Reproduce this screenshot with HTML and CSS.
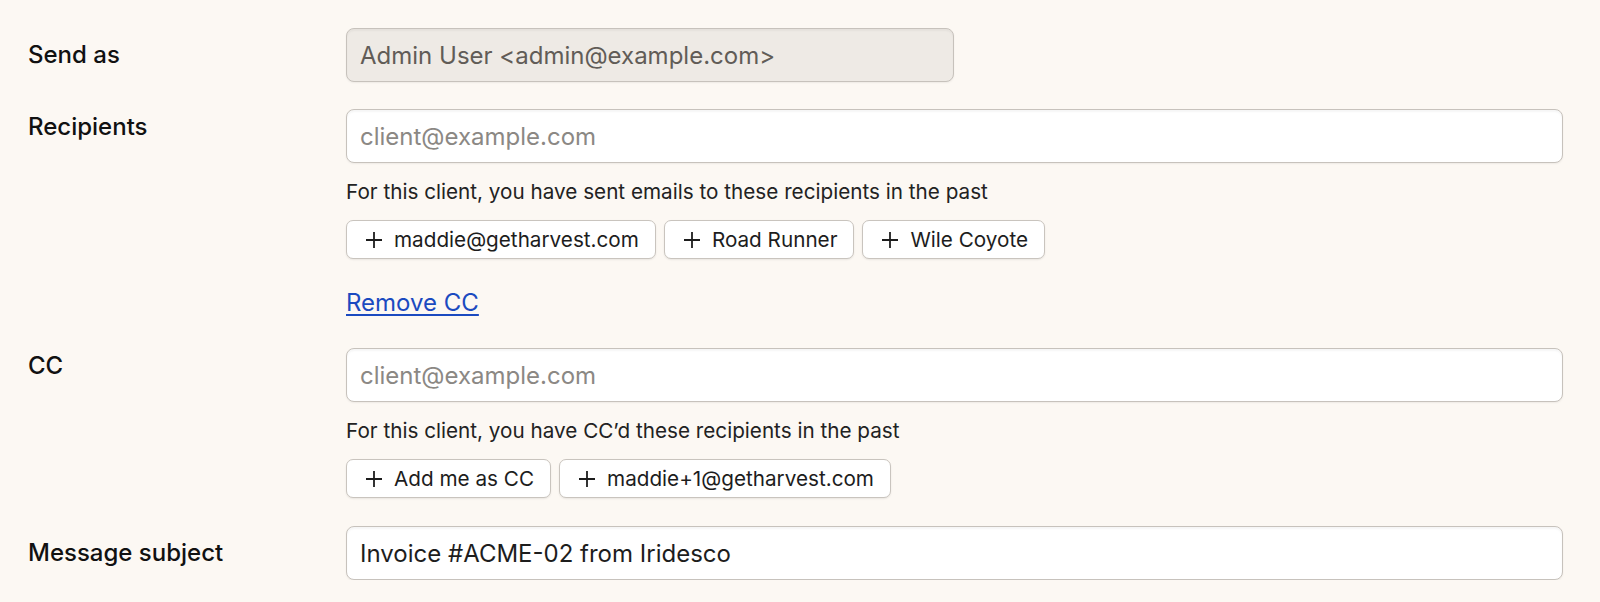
FILE: index.html
```html
<!DOCTYPE html>
<html lang="en">
<head>
    <meta charset="UTF-8">
    <meta name="viewport" content="width=device-width, initial-scale=1.0">
    <title>Send invoice</title>
    <link rel="stylesheet" href="styles.css">
</head>
<body>

    <form class="send-form" onsubmit="return false;">

        <div class="field field-center">
            <label class="field-label" for="sendAs">Send as</label>
            <div class="field-body">
                <input class="text-input text-input-disabled" id="sendAs" type="text" value="Admin User <admin@example.com>" disabled>
            </div>
        </div>

        <div class="field">
            <label class="field-label" for="recipients">Recipients</label>
            <div class="field-body">
                <input class="text-input" id="recipients" type="text" placeholder="client@example.com">
                <p class="hint">For this client, you have sent emails to these recipients in the past</p>
                <div class="chips">
                    <button class="chip" type="button">
                        <svg class="chip-icon" viewBox="0 0 18 18"><path d="M9 1v16M1 9h16"/></svg>
                        maddie@getharvest.com
                    </button>
                    <button class="chip" type="button">
                        <svg class="chip-icon" viewBox="0 0 18 18"><path d="M9 1v16M1 9h16"/></svg>
                        Road Runner
                    </button>
                    <button class="chip" type="button">
                        <svg class="chip-icon" viewBox="0 0 18 18"><path d="M9 1v16M1 9h16"/></svg>
                        Wile Coyote
                    </button>
                </div>
                <a class="link" href="#">Remove CC</a>
            </div>
        </div>

        <div class="field">
            <label class="field-label" for="cc">CC</label>
            <div class="field-body">
                <input class="text-input" id="cc" type="text" placeholder="client@example.com">
                <p class="hint">For this client, you have CC’d these recipients in the past</p>
                <div class="chips">
                    <button class="chip" type="button">
                        <svg class="chip-icon" viewBox="0 0 18 18"><path d="M9 1v16M1 9h16"/></svg>
                        Add me as CC
                    </button>
                    <button class="chip" type="button">
                        <svg class="chip-icon" viewBox="0 0 18 18"><path d="M9 1v16M1 9h16"/></svg>
                        maddie+1@getharvest.com
                    </button>
                </div>
            </div>
        </div>

        <div class="field field-center field-last">
            <label class="field-label" for="subject">Message subject</label>
            <div class="field-body">
                <input class="text-input" id="subject" type="text" value="Invoice #ACME-02 from Iridesco">
            </div>
        </div>

    </form>

</body>
</html>
```

FILE: styles.css
```css
body {
    margin: 0;
    background-color: #fcf8f3;
    color: #1d1d1d;
    font-family: Inter, "Liberation Sans", sans-serif;
}
.send-form {
    display: flex;
    flex-direction: column;
    gap: 27px;
    padding: 28px 37px 0 28px;
}
.field {
    display: grid;
    grid-template-columns: 318px 1fr;
    align-items: start;
}
.field-center {
    align-items: center;
}
.field-last {
    margin-top: 1px;
}
.field-label {
    font-size: 24px;
    font-weight: 500;
    line-height: 36px;
    color: #111;
}
.field-body {
    display: flex;
    flex-direction: column;
    align-items: flex-start;
}
.text-input {
    box-sizing: border-box;
    width: 100%;
    height: 54px;
    padding: 0 13px;
    border: 1px solid #c7c2bc;
    border-radius: 8px;
    background-color: #fff;
    box-shadow: inset 0 2px 2px rgba(0,0,0,0.04), 0 1px 2px rgba(0,0,0,0.06);
    font-family: inherit;
    font-size: 24px;
    color: #1d1d1d;
    outline: none;
}
.text-input::placeholder {
    color: #8b8884;
}
.text-input-disabled {
    width: 608px;
    background-color: #eeeae5;
    color: #615c57;
}
.hint {
    margin: 14px 0 0;
    font-size: 20.7px;
    line-height: 29px;
    color: #222;
}
.chips {
    display: flex;
    gap: 8px;
    margin-top: 14px;
}
.chip {
    display: flex;
    align-items: center;
    gap: 11px;
    height: 39px;
    padding: 0 16px 0 18px;
    border: 1px solid #c9c4be;
    border-radius: 7px;
    background-color: #fff;
    box-shadow: 0 1px 2px rgba(0,0,0,0.08);
    font-family: inherit;
    font-size: 20.7px;
    color: #1d1d1d;
    cursor: pointer;
}
.chip-icon {
    width: 18px;
    height: 18px;
    fill: none;
    stroke: #1d1d1d;
    stroke-width: 1.8;
}
.link {
    margin-top: 26px;
    font-size: 24px;
    line-height: 36px;
    color: #1b4ac0;
    text-underline-offset: 3px;
}
```
